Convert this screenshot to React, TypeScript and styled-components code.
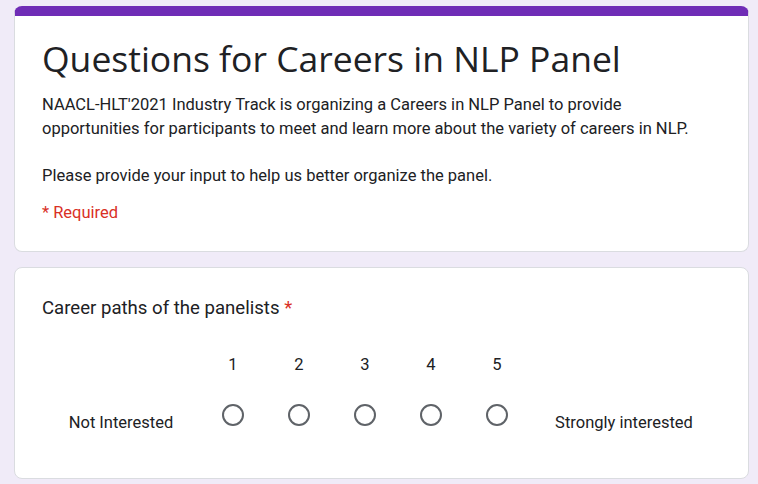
import React from 'react';
import styled, { createGlobalStyle } from 'styled-components';

const GlobalStyle = createGlobalStyle`
  html, body {
    margin: 0;
    padding: 0;
    background: #f0ebf8;
  }
  body {
    font-family: Roboto, "Liberation Sans", Arial, sans-serif;
    color: #202124;
  }
`;

const Page = styled.div`
  display: flex;
  flex-direction: column;
  gap: 15px;
  padding: 6px 9px 6px 14px;
`;

const Card = styled.div<{ $accent?: boolean }>`
  background: #fff;
  border: 1px solid #dadce0;
  border-radius: 8px;
  ${(p) => p.$accent && `border-top: 10px solid #6f2cb6;`}
`;

const HeaderBody = styled.div`
  padding: 18px 27px 26px;
`;

const Title = styled.h1`
  margin: 0;
  font-family: "Open Sans", Roboto, sans-serif;
  font-weight: 400;
  font-size: 35.5px;
  line-height: 48px;
  color: #202124;
`;

const Description = styled.p`
  margin: 11px 0 0;
  font-size: 16.5px;
  line-height: 23.5px;
  color: #202124;
`;

const Required = styled.div`
  margin-top: 14px;
  font-size: 16.5px;
  line-height: 23.5px;
  color: #d93025;
`;

const QuestionBody = styled.div`
  padding: 28px 27px 33px;
`;

const QuestionTitle = styled.div`
  font-size: 18.6px;
  line-height: 24px;
  color: #202124;
`;

const Star = styled.span`
  color: #d93025;
`;

const Scale = styled.div`
  display: grid;
  grid-template-columns: 158px repeat(5, 66px) 188px;
  grid-template-rows: 40px 60px;
  align-items: center;
  margin-top: 25px;
  font-size: 16.5px;
`;

const Cell = styled.div<{ $row: number }>`
  grid-row: ${(p) => p.$row};
  display: flex;
  justify-content: center;
  align-items: center;
`;

const Label = styled(Cell)`
  padding-top: 16px;
`;

const Radio = styled.div`
  width: 22px;
  height: 22px;
  box-sizing: border-box;
  border: 2px solid #5f6368;
  border-radius: 50%;
`;

export default function App() {
  const options = [1, 2, 3, 4, 5];
  return (
    <>
      <GlobalStyle />
      <Page>
        <Card $accent>
          <HeaderBody>
            <Title>Questions for Careers in NLP Panel</Title>
            <Description>
              NAACL-HLT'2021 Industry Track is organizing a Careers in NLP Panel to provide
              <br />
              opportunities for participants to meet and learn more about the variety of careers in NLP.
              <br />
              <br />
              Please provide your input to help us better organize the panel.
            </Description>
            <Required>* Required</Required>
          </HeaderBody>
        </Card>
        <Card>
          <QuestionBody>
            <QuestionTitle>
              Career paths of the panelists <Star>*</Star>
            </QuestionTitle>
            <Scale>
              <Cell $row={1} />
              {options.map((n) => (
                <Cell key={`n${n}`} $row={1}>
                  {n}
                </Cell>
              ))}
              <Cell $row={1} />
              <Label $row={2}>Not Interested</Label>
              {options.map((n) => (
                <Cell key={`r${n}`} $row={2}>
                  <Radio />
                </Cell>
              ))}
              <Label $row={2}>Strongly interested</Label>
            </Scale>
          </QuestionBody>
        </Card>
      </Page>
    </>
  );
}
